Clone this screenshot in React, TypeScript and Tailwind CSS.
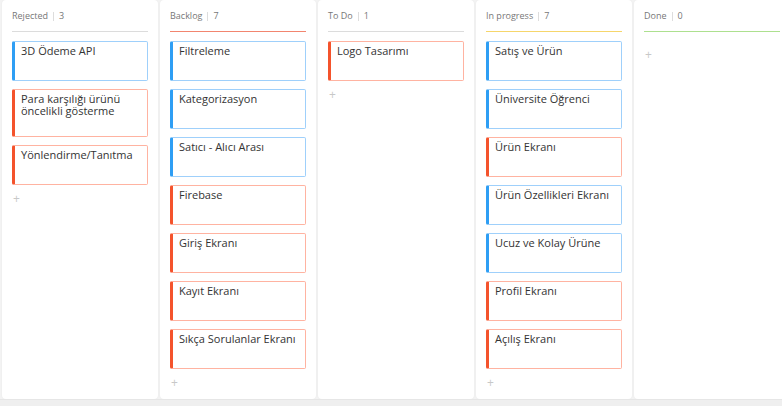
type Card = { title: string; kind: "blue" | "red" };

type Column = {
  name: string;
  line: string;
  cards: Card[];
};

const columns: Column[] = [
  {
    name: "Rejected",
    line: "bg-[#dcdcdc]",
    cards: [
      { title: "3D Ödeme API", kind: "blue" },
      { title: "Para karşılığı ürünü öncelikli gösterme", kind: "red" },
      { title: "Yönlendirme/Tanıtma", kind: "red" },
    ],
  },
  {
    name: "Backlog",
    line: "bg-[#f2856f]",
    cards: [
      { title: "Filtreleme", kind: "blue" },
      { title: "Kategorizasyon", kind: "blue" },
      { title: "Satıcı - Alıcı Arası", kind: "blue" },
      { title: "Firebase", kind: "red" },
      { title: "Giriş Ekranı", kind: "red" },
      { title: "Kayıt Ekranı", kind: "red" },
      { title: "Sıkça Sorulanlar Ekranı", kind: "red" },
    ],
  },
  {
    name: "To Do",
    line: "bg-[#dcdcdc]",
    cards: [{ title: "Logo Tasarımı", kind: "red" }],
  },
  {
    name: "In progress",
    line: "bg-[#f6d66b]",
    cards: [
      { title: "Satış ve Ürün", kind: "blue" },
      { title: "Üniversite Öğrenci", kind: "blue" },
      { title: "Ürün Ekranı", kind: "red" },
      { title: "Ürün Özellikleri Ekranı", kind: "blue" },
      { title: "Ucuz ve Kolay Ürüne", kind: "blue" },
      { title: "Profil Ekranı", kind: "red" },
      { title: "Açılış Ekranı", kind: "red" },
    ],
  },
  {
    name: "Done",
    line: "bg-[#ade08f]",
    cards: [],
  },
];

function TaskCard({ card }: { card: Card }) {
  const border =
    card.kind === "blue"
      ? "border-[#9fd0fb] border-l-[#2e9ef4]"
      : "border-[#ffb3a1] border-l-[#f4532c]";
  return (
    <div
      className={`min-h-[40px] bg-white border border-l-[3px] rounded-[2px] pl-[6px] pr-2 pt-[3px] pb-[19px] text-[11px] leading-[12px] text-[#333] ${border}`}
    >
      {card.title}
    </div>
  );
}

function BoardColumn({ col }: { col: Column }) {
  return (
    <div className="w-[156px] shrink-0 bg-white rounded-[4px] px-[10px] pt-[10px] pb-2 flex flex-col shadow-[0_0_2px_rgba(0,0,0,0.06)]">
      <div className="flex items-center text-[9px] text-[#777] h-[12px]">
        <span>{col.name}</span>
        <span className="mx-[5px] w-px h-[9px] bg-[#ddd]" />
        <span>{col.cards.length}</span>
      </div>
      <div className={`h-px mt-[9px] mb-[9px] ${col.line}`} />
      <div className="flex flex-col gap-[8px]">
        {col.cards.map((c) => (
          <TaskCard key={c.title} card={c} />
        ))}
      </div>
      <div className="text-[#c8c8c8] text-[12px] leading-none pl-[1px] mt-[8px]">+</div>
    </div>
  );
}

export default function App() {
  return (
    <div
      className="w-[782px] h-[406px] overflow-hidden bg-[#f3f3f3] flex flex-col"
      style={{ fontFamily: '"Open Sans", "Liberation Sans", sans-serif' }}
    >
      <div className="h-[399px] flex gap-[2px] pl-[2px] items-stretch">
        {columns.map((col) => (
          <BoardColumn key={col.name} col={col} />
        ))}
      </div>
      <div className="flex-1 bg-[#efefef] border-t border-[#e6e6e6]" />
    </div>
  );
}
